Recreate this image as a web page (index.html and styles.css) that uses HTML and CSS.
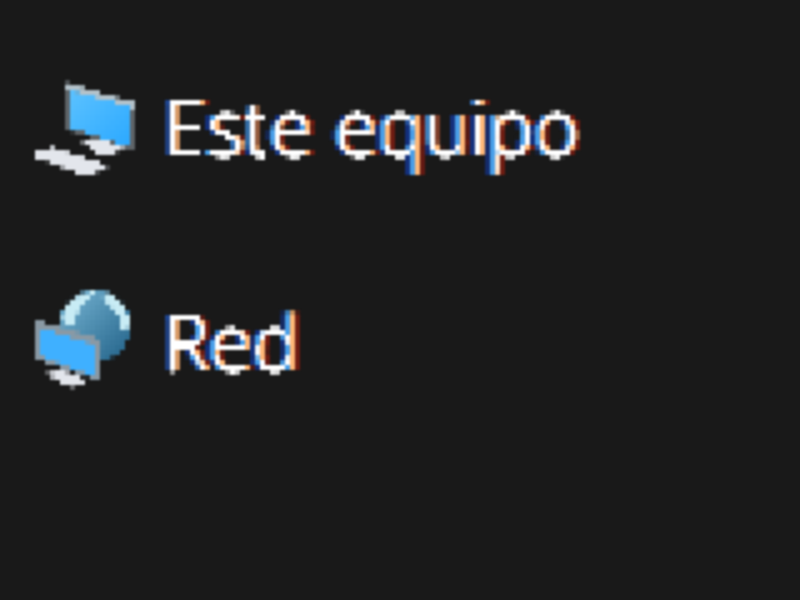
FILE: index.html
```html
<!DOCTYPE html>
<html lang="es">
<head>
<meta charset="utf-8">
<title>Este equipo</title>
<link rel="stylesheet" href="styles.css">
</head>
<body>
<svg class="defs" width="0" height="0" aria-hidden="true">
  <filter id="pixelate" x="0" y="0" width="1" height="1" color-interpolation-filters="sRGB">
    <feFlood x="2" y="2" width="1" height="1" flood-color="#000"/>
    <feComposite width="5" height="5"/>
    <feTile result="grid"/>
    <feComposite in="SourceGraphic" in2="grid" operator="in"/>
    <feMorphology operator="dilate" radius="2"/>
    <feGaussianBlur stdDeviation="0.8"/>
  </filter>
</svg>
<main class="list">
  <div class="item">
    <svg class="icon" viewBox="0 0 110 100" aria-hidden="true">
      <defs>
        <linearGradient id="screenA" x1="0" y1="0" x2="1" y2="1">
          <stop offset="0" stop-color="#5cc2ff"/>
          <stop offset="1" stop-color="#2aa8ff"/>
        </linearGradient>
      </defs>
      <polygon points="33,2 104,23 104,72 33,50" fill="#5f6468"/>
      <polygon points="33,2 104,23 104,29 33,9" fill="#b4c2ca"/>
      <polygon points="37,10 99,27 99,68 37,47" fill="url(#screenA)"/>
      <polygon points="50,62 71,60 92,68 78,77 65,75" fill="#e3e6ec"/>
      <polygon points="-4,75 20,67 78,86 56,97" fill="#e3e6ec"/>
    </svg>
    <span class="label">Este equipo</span>
  </div>
  <div class="item">
    <svg class="icon" viewBox="0 0 110 100" aria-hidden="true">
      <defs>
        <linearGradient id="globeA" x1="0" y1="0" x2="1" y2="1">
          <stop offset="0" stop-color="#7ab8d6"/>
          <stop offset="1" stop-color="#1f5f86"/>
        </linearGradient>
      </defs>
      <circle cx="63" cy="31" r="36" fill="url(#globeA)"/>
      <path d="M30 20 Q40 -2 66 -4 L54 8 Q44 14 42 32 L32 32 Z" fill="#c8ecf5"/>
      <path d="M74 -3 Q94 6 99 32 L90 34 Q86 14 70 4 Z" fill="#c8ecf5"/>
      <polygon points="2,24 67,44 67,86 2,64" fill="#8a99a4"/>
      <polygon points="6,32 63,50 63,82 6,60" fill="#3fb0ff"/>
      <polygon points="12,78 32,76 56,85 42,93 30,88" fill="#e3e6ec"/>
    </svg>
    <span class="label">Red</span>
  </div>
</main>
</body>
</html>
```
FILE: styles.css
```css
html, body {
  margin: 0;
  height: 100%;
  background: #191919;
  overflow: hidden;
}
.defs {
  display: block;
  height: 0;
}
.list {
  display: flex;
  flex-direction: column;
  gap: 115px;
  padding: 80px 0 0 32px;
  filter: url(#pixelate);
  height: 520px;
}
.item {
  display: flex;
  align-items: center;
  gap: 22px;
  height: 100px;
}
.icon {
  width: 110px;
  height: 100px;
  overflow: visible;
  flex: none;
}
.label {
  position: relative;
  top: -4px;
  font-family: "Noto Sans", "Open Sans", sans-serif;
  font-weight: 100;
  font-size: 76px;
  letter-spacing: 2px;
  line-height: 100px;
  color: #fff;
  text-shadow:
    0 1px #fff, 0 -1px #fff, 0 2px #fff, 0 -2px #fff,
    -1px 0 #4a9fe8, -2px 0 #4a9fe8, -3px 0 #4a9fe8, -4px 0 #4a9fe8,
    1px 0 #ffb878, 2px 0 #ffb878, 3px 0 #ffb878, 4px 0 #ffb878,
    -6px 0 #14307c, -8px 0 #14307c,
    6px 0 #6e1c12, 8px 0 #6e1c12;
}
```
